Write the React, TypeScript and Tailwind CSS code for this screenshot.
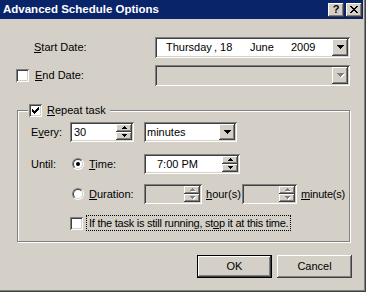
import React from 'react';

const raised =
  'bg-[#d4d0c8] shadow-[inset_-1px_-1px_0_#404040,inset_1px_1px_0_#fff,inset_-2px_-2px_0_#808080]';
const sunken =
  'shadow-[inset_1px_1px_0_#808080,inset_-1px_-1px_0_#fff,inset_2px_2px_0_#404040,inset_-2px_-2px_0_#d4d0c8]';

const DOWN_BIG = 'M0 0h7v1h-1v1h-1v1h-1v1h-1v-1h-1v-1h-1v-1h-1z';
const DOWN_SMALL = 'M0 0h5v1h-1v1h-1v1h-1v-1h-1v-1h-1z';
const UP_SMALL = 'M2 0h1v1h1v1h1v1h-5v-1h1v-1h1z';

function Arrow({ d, w, h, disabled }: { d: string; w: number; h: number; disabled?: boolean }) {
  return (
    <svg width={w + 1} height={h + 1} viewBox={`0 0 ${w + 1} ${h + 1}`} shapeRendering="crispEdges">
      {disabled && <path d={d} fill="#fff" transform="translate(1 1)" />}
      <path d={d} fill={disabled ? '#808080' : '#000'} />
    </svg>
  );
}

function DropButton({ h, disabled }: { h: number; disabled?: boolean }) {
  return (
    <div className={`w-[16px] ${raised} flex items-center justify-center pl-[1px]`} style={{ height: h }}>
      <Arrow d={DOWN_BIG} w={7} h={4} disabled={disabled} />
    </div>
  );
}

function Spinner({ disabled }: { disabled?: boolean }) {
  return (
    <div className="flex flex-col w-[16px] h-[16px]">
      <div className={`h-[8px] ${raised} flex items-center justify-center pl-[1px]`}>
        <Arrow d={UP_SMALL} w={5} h={3} disabled={disabled} />
      </div>
      <div className={`h-[8px] ${raised} flex items-center justify-center pl-[1px]`}>
        <Arrow d={DOWN_SMALL} w={5} h={3} disabled={disabled} />
      </div>
    </div>
  );
}

function Checkbox({ checked }: { checked?: boolean }) {
  return (
    <div className={`w-[13px] h-[13px] shrink-0 bg-white ${sunken} flex items-center justify-center`}>
      {checked && (
        <svg width="7" height="7" viewBox="0 0 7 7" shapeRendering="crispEdges">
          <path d="M6 0h1v3h-1v1h-1v1h-1v1h-1v1h-1v-1h-1v-1h-1v-3h1v1h1v1h1v-1h1v-1h1z" fill="#000" />
        </svg>
      )}
    </div>
  );
}

function Radio({ checked }: { checked?: boolean }) {
  return (
    <div className="w-[12px] h-[12px] shrink-0 rounded-full border border-t-[#808080] border-l-[#808080] border-b-white border-r-white">
      <div className="w-full h-full rounded-full border border-t-[#404040] border-l-[#404040] border-b-[#d4d0c8] border-r-[#d4d0c8] bg-white flex items-center justify-center">
        {checked && <div className="w-[4px] h-[4px] rounded-full bg-black" />}
      </div>
    </div>
  );
}

function CloseGlyph() {
  const rows = ['xx....xx', '.xx..xx.', '..xxxx..', '...xx...', '..xxxx..', '.xx..xx.', 'xx....xx'];
  return (
    <svg width="8" height="7" viewBox="0 0 8 7" shapeRendering="crispEdges">
      {rows.map((r, y) =>
        r.split('').map((c, x) => (c === 'x' ? <rect key={`${x}-${y}`} x={x} y={y} width="1" height="1" fill="#000" /> : null))
      )}
    </svg>
  );
}

export default function App() {
  return (
    <div className="w-[366px] h-[292px] bg-[#d4d0c8] shadow-[inset_-1px_-1px_0_#404040,inset_-2px_-2px_0_#808080] text-[11px] leading-none text-black font-['Liberation_Sans',Arial,sans-serif] overflow-hidden select-none">
      {/* title bar */}
      <div className="h-[19px] mr-[3px] bg-[#0a246a] flex items-center pl-[3px] pr-[1px]">
        <span className="flex-1 text-white font-bold text-[11.5px]">Advanced Schedule Options</span>
        <div className={`w-[16px] h-[14px] ${raised} flex items-center justify-center font-bold text-[11px] pb-[1px]`}>?</div>
        <div className={`w-[16px] h-[14px] ml-[2px] ${raised} flex items-center justify-center pb-[1px]`}>
          <CloseGlyph />
        </div>
      </div>

      {/* start date */}
      <div className="flex items-center h-[21px] mt-[18px]">
        <span className="w-[155px] pl-[34px]">
          <u>S</u>tart Date:
        </span>
        <div className={`w-[195px] h-[21px] bg-white ${sunken} flex items-center p-[2px]`}>
          <div className="flex-1 flex items-center pl-[9px]">
            <span className="w-[48px]">Thursday</span>
            <span className="w-[36px]">, 18</span>
            <span className="w-[41px]">June</span>
            <span>2009</span>
          </div>
          <DropButton h={17} />
        </div>
      </div>

      {/* end date */}
      <div className="flex items-center h-[21px] mt-[7px] pl-[16px]">
        <Checkbox />
        <span className="w-[126px] pl-[6px]">
          <u>E</u>nd Date:
        </span>
        <div className={`w-[195px] h-[21px] bg-[#d4d0c8] ${sunken} flex items-center justify-end p-[2px]`}>
          <DropButton h={17} disabled />
        </div>
      </div>

      {/* repeat group */}
      <div className="relative ml-[17px] mt-[24px] w-[333px] h-[132px] border border-[#808080] shadow-[inset_1px_1px_0_#fff,1px_1px_0_#fff] pt-[11px]">
        <div className="absolute -top-[7px] left-[10px] h-[13px] bg-[#d4d0c8] flex items-center pl-[1px] pr-[4px]">
          <Checkbox checked />
          <span className="ml-[5px]">
            <u>R</u>epeat task
          </span>
        </div>

        <div className="flex items-center h-[20px] pl-[13px]">
          <span className="w-[39px]">
            E<u>v</u>ery:
          </span>
          <div className={`w-[64px] h-[20px] bg-white ${sunken} flex items-center p-[2px]`}>
            <span className="flex-1 pl-[2px]">30</span>
            <Spinner />
          </div>
          <div className={`ml-[10px] w-[93px] h-[20px] bg-white ${sunken} flex items-center p-[2px]`}>
            <span className="flex-1 pl-[1px]">minutes</span>
            <DropButton h={16} />
          </div>
        </div>

        <div className="flex items-center h-[20px] mt-[12px] pl-[13px]">
          <span className="w-[41px]">Until:</span>
          <Radio checked />
          <span className="ml-[5px] w-[55px]">
            <u>T</u>ime:
          </span>
          <div className={`w-[96px] h-[20px] bg-white ${sunken} flex items-center p-[2px]`}>
            <span className="flex-1 pl-[11px]">7:00 PM</span>
            <Spinner />
          </div>
        </div>

        <div className="flex items-center h-[20px] mt-[10px] pl-[54px]">
          <Radio />
          <span className="ml-[5px] w-[55px]">
            <u>D</u>uration:
          </span>
          <div className={`w-[58px] h-[20px] bg-[#d4d0c8] ${sunken} flex items-center justify-end p-[2px]`}>
            <Spinner disabled />
          </div>
          <span className="ml-[4px] w-[36px]">
            <u>h</u>our(s)
          </span>
          <div className={`w-[55px] h-[20px] bg-[#d4d0c8] ${sunken} flex items-center justify-end p-[2px]`}>
            <Spinner disabled />
          </div>
          <span className="ml-[4px] tracking-[-0.2px]">
            <u>m</u>inute(s)
          </span>
        </div>

        <div className="flex items-center h-[16px] mt-[11px] pl-[52px]">
          <Checkbox />
          <span className="ml-[3px] h-[16px] flex items-center px-[2px] border border-dotted border-black tracking-[-0.25px] whitespace-pre">
            If the task is still running, st<u>o</u>p it at this time.
          </span>
        </div>
      </div>

      {/* buttons */}
      <div className="flex justify-end gap-[5px] mt-[13px] pr-[14px]">
        <button className="w-[75px] h-[23px] border border-black bg-[#d4d0c8] shadow-[inset_-1px_-1px_0_#404040,inset_1px_1px_0_#fff,inset_-2px_-2px_0_#808080] flex items-center justify-center">
          OK
        </button>
        <button className={`w-[75px] h-[23px] ${raised} flex items-center justify-center`}>Cancel</button>
      </div>
    </div>
  );
}
